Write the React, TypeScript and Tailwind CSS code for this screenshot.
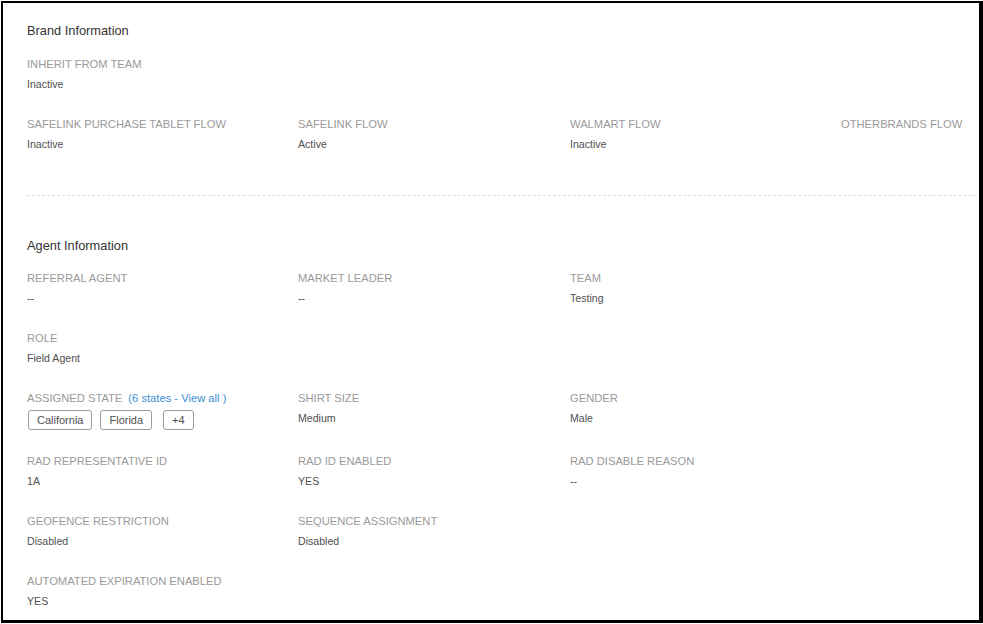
type Field = { label: string; value: string };

const brandTop: Field[] = [{ label: "Inherit from team", value: "Inactive" }];

const brandFlows: Field[] = [
  { label: "Safelink purchase tablet flow", value: "Inactive" },
  { label: "Safelink flow", value: "Active" },
  { label: "Walmart flow", value: "Inactive" },
  { label: "Otherbrands flow", value: "" },
];

const gridCols = "grid grid-cols-[271px_272px_271px_271px] gap-y-[26px]";

function Label({ children }: { children: React.ReactNode }) {
  return (
    <div className="text-[11.2px] leading-[14px] uppercase text-[#9a9a9a] whitespace-nowrap">
      {children}
    </div>
  );
}

function Value({ children }: { children: React.ReactNode }) {
  return (
    <div className="mt-1.5 text-[10.6px] leading-[14px] text-[#505050] whitespace-nowrap">
      {children}
    </div>
  );
}

function Item({ label, value }: Field) {
  return (
    <div>
      <Label>{label}</Label>
      {value !== "" && <Value>{value}</Value>}
    </div>
  );
}

function SectionTitle({ children, className = "" }: { children: React.ReactNode; className?: string }) {
  return <h2 className={`text-[12.8px] leading-4 text-[#333] ${className}`}>{children}</h2>;
}

function StatePill({ children, className = "" }: { children: React.ReactNode; className?: string }) {
  return (
    <span
      className={`inline-flex items-center h-5 px-2 border border-[#9a9a9a] rounded-[3px] text-[11px] text-[#505050] ${className}`}
    >
      {children}
    </span>
  );
}

export default function App() {
  return (
    <div className="w-[983px] h-[624px] bg-white pt-px pl-px">
      <div
        className="w-[982px] h-[622px] border-t-2 border-l-2 border-r-4 border-b-[3px] border-black overflow-hidden"
        style={{ fontFamily: '"Liberation Sans", Arial, sans-serif' }}
      >
        <div className="pl-6 pt-5">
          {/* Brand information */}
          <section className="pb-[44px]">
            <SectionTitle className="mb-[18px]">Brand Information</SectionTitle>
            <div className={gridCols}>
              {brandTop.map((f) => (
                <div key={f.label} className="col-span-4">
                  <Item {...f} />
                </div>
              ))}
              {brandFlows.map((f) => (
                <Item key={f.label} {...f} />
              ))}
            </div>
          </section>

          <div className="border-t border-dashed border-[#dedede] w-[1100px]" />

          {/* Agent information */}
          <section className="pt-[42px]">
            <SectionTitle className="mb-[17px]">Agent Information</SectionTitle>
            <div className={gridCols}>
              <Item label="Referral agent" value="--" />
              <Item label="Market leader" value="--" />
              <Item label="Team" value="Testing" />
              <div />

              <div className="col-span-4">
                <Item label="Role" value="Field Agent" />
              </div>

              <div className="mb-[-2px]">
                <Label>
                  Assigned state
                  <span className="ml-1.5 normal-case text-[#3b8ed3]">(6 states - View all )</span>
                </Label>
                <div className="mt-[5px] flex">
                  <StatePill className="ml-px">California</StatePill>
                  <StatePill className="ml-2">Florida</StatePill>
                  <StatePill className="ml-[11px]">+4</StatePill>
                </div>
              </div>
              <Item label="Shirt size" value="Medium" />
              <Item label="Gender" value="Male" />
              <div />

              <Item label="Rad representative ID" value="1A" />
              <Item label="Rad ID enabled" value="YES" />
              <Item label="Rad disable reason" value="--" />
              <div />

              <Item label="Geofence restriction" value="Disabled" />
              <Item label="Sequence assignment" value="Disabled" />
              <div />
              <div />

              <div className="col-span-4">
                <Item label="Automated expiration enabled" value="YES" />
              </div>
            </div>
          </section>
        </div>
      </div>
    </div>
  );
}
